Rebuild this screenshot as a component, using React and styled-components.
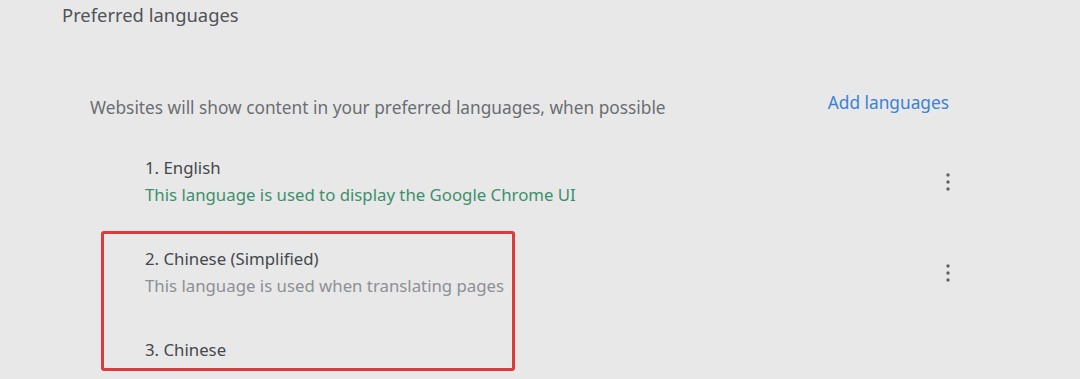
import React from "react"
import styled, { createGlobalStyle } from "styled-components"

const GlobalStyle = createGlobalStyle`
  html, body {
    margin: 0;
    padding: 0;
    background: #e8e8e8;
  }
  body {
    font-family: "Noto Sans", "Open Sans", sans-serif;
    width: 1080px;
    height: 379px;
    overflow: hidden;
  }
`

const languages = [
  { name: "1. English", note: "This language is used to display the Google Chrome UI", tone: "ui", menu: true },
  { name: "2. Chinese (Simplified)", note: "This language is used when translating pages", tone: "muted", menu: true },
  { name: "3. Chinese" },
]

const App = () => (
  <Page>
    <GlobalStyle />
    <Title>Preferred languages</Title>
    <Section>
      <Header>
        <Description>Websites will show content in your preferred languages, when possible</Description>
        <AddLink>Add languages</AddLink>
      </Header>
      <List>
        {languages.map(lang => (
          <Row key={lang.name}>
            <RowText>
              <Name>{lang.name}</Name>
              {lang.note && <Note $tone={lang.tone}>{lang.note}</Note>}
            </RowText>
            {lang.menu && (
              <MenuButton aria-label="More actions">
                <svg width="4" height="18" viewBox="0 0 4 18">
                  <circle cx="2" cy="2" r="1.7" fill="#5f6368" />
                  <circle cx="2" cy="9" r="1.7" fill="#5f6368" />
                  <circle cx="2" cy="16" r="1.7" fill="#5f6368" />
                </svg>
              </MenuButton>
            )}
          </Row>
        ))}
        <Highlight />
      </List>
    </Section>
  </Page>
)

const Page = styled.div`
  padding: 3px 0 0 62px;
  color: #3c4043;
`

const Title = styled.h2`
  margin: 0;
  font-size: 18.4px;
  font-weight: 400;
  line-height: 24px;
  color: #505357;
`

const Section = styled.div`
  padding: 64px 131px 0 28px;
`

const Header = styled.div`
  display: flex;
  justify-content: space-between;
  align-items: flex-start;
`

const Description = styled.p`
  margin: 0;
  padding-top: 5px;
  font-size: 17.3px;
  line-height: 24px;
  color: #6b6e72;
`

const AddLink = styled.a`
  font-size: 17.3px;
  line-height: 24px;
  color: #3b82d6;
  cursor: pointer;
`

const List = styled.div`
  position: relative;
  padding: 36px 0 0 55px;
`

const Row = styled.div`
  display: flex;
  justify-content: space-between;
  align-items: center;
  padding-bottom: 40px;
`

const RowText = styled.div`
  display: flex;
  flex-direction: column;
`

const Name = styled.span`
  font-size: 16.8px;
  line-height: 24px;
  color: #45484c;
`

const Note = styled.span`
  margin-top: 3px;
  font-size: 16.8px;
  line-height: 24px;
  color: ${({ $tone }) => ($tone === "ui" ? "#3f8f6c" : "#8d9094")};
`

const MenuButton = styled.button`
  margin-right: -1px;
  padding: 0;
  border: none;
  background: none;
  display: flex;
  cursor: pointer;
`

const Highlight = styled.div`
  position: absolute;
  box-sizing: border-box;
  left: 11px;
  top: 111px;
  width: 414px;
  height: 140px;
  border: 3px solid #dc3b3d;
  border-radius: 3px;
  pointer-events: none;
`

export default App
